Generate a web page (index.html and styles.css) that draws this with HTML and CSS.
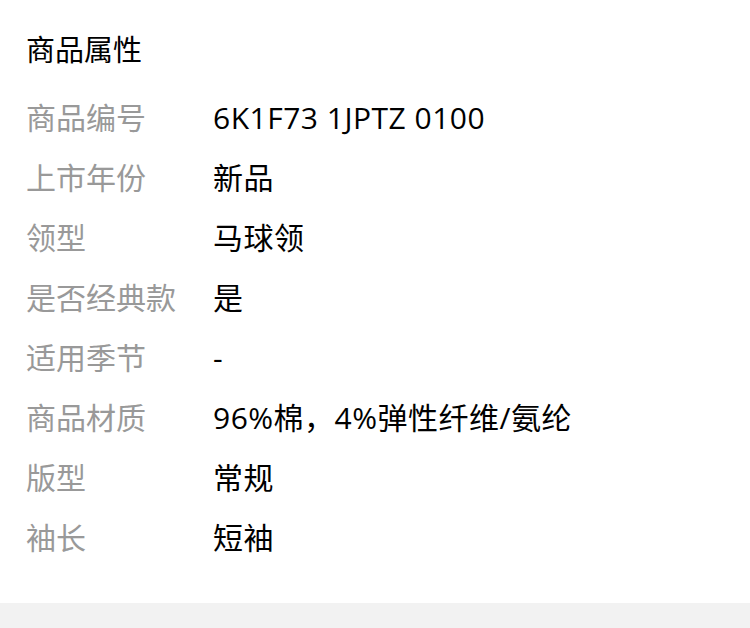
FILE: index.html
```html
<!DOCTYPE html>
<html lang="zh-CN">
<head>
<meta charset="utf-8">
<link rel="stylesheet" href="styles.css">
</head>
<body>
<section class="attrs">
  <h2 class="attrs-title">商品属性</h2>
  <dl class="attrs-list">
    <div class="row"><dt>商品编号</dt><dd>6K1F73 1JPTZ 0100</dd></div>
    <div class="row"><dt>上市年份</dt><dd>新品</dd></div>
    <div class="row"><dt>领型</dt><dd>马球领</dd></div>
    <div class="row"><dt>是否经典款</dt><dd>是</dd></div>
    <div class="row"><dt>适用季节</dt><dd>-</dd></div>
    <div class="row"><dt>商品材质</dt><dd>96%棉，4%弹性纤维/氨纶</dd></div>
    <div class="row"><dt>版型</dt><dd>常规</dd></div>
    <div class="row"><dt>袖长</dt><dd>短袖</dd></div>
  </dl>
</section>
<div class="footer-band"></div>
</body>
</html>
```
FILE: styles.css
```css
html, body {
  margin: 0;
  padding: 0;
  background: #fff;
}
body {
  font-family: "Open Sans", "Noto Sans CJK SC", sans-serif;
  color: #000;
}
.attrs {
  padding: 20px 0 35px 26px;
}
.attrs-title {
  margin: 0 0 8px;
  font-size: 29px;
  font-weight: normal;
  line-height: 60px;
  height: 60px;
}
.attrs-list {
  margin: 0;
}
.row {
  display: flex;
  height: 60px;
  align-items: center;
  font-size: 30px;
  line-height: 60px;
}
.row dt {
  width: 187px;
  flex: none;
  color: #999;
}
.row dd {
  margin: 0;
  color: #000;
  letter-spacing: 0.5px;
}
.footer-band {
  height: 40px;
  background: #f2f2f2;
}
```
